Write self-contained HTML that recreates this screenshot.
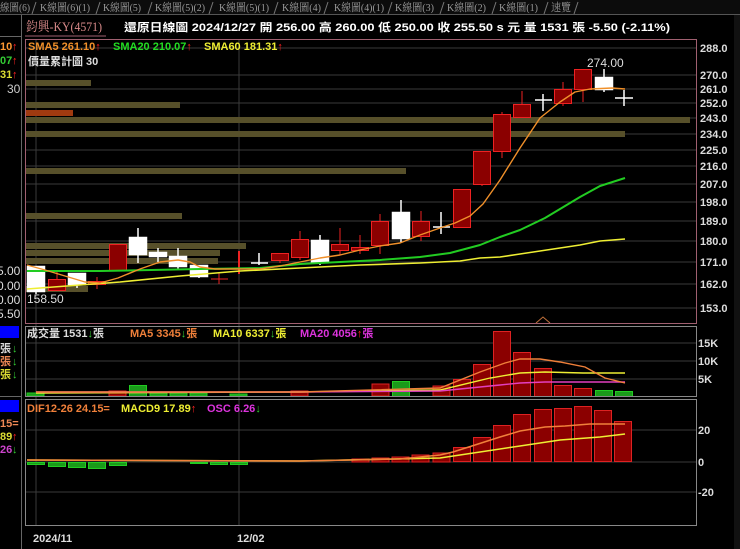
<!DOCTYPE html>
<html><head><meta charset="utf-8"><style>
body{margin:0;background:#000;width:740px;height:549px;overflow:hidden}
svg{display:block}
.s{font-family:"Liberation Sans","Noto Sans CJK TC",sans-serif;font-size:11px;font-weight:bold}
.t{font-family:"Liberation Serif","Noto Serif CJK SC",serif;font-size:11px;fill:#9a9a9a}
</style></head><body>
<svg width="740" height="549" xmlns="http://www.w3.org/2000/svg">
<rect width="740" height="549" fill="#000"/>
<!-- tabs -->
<rect x="0" y="0" width="740" height="14" fill="#0c0c0c"/>
<line x1="0" y1="14.5" x2="740" y2="14.5" stroke="#555"/>
<g class="t">
<text x="0" y="11" textLength="30" lengthAdjust="spacingAndGlyphs">線圖(6)</text>
<text x="40" y="11" textLength="50" lengthAdjust="spacingAndGlyphs">K線圖(6)(1)</text>
<text x="103" y="11" textLength="38" lengthAdjust="spacingAndGlyphs">K線圖(5)</text>
<text x="155" y="11" textLength="50" lengthAdjust="spacingAndGlyphs">K線圖(5)(2)</text>
<text x="219" y="11" textLength="50" lengthAdjust="spacingAndGlyphs">K線圖(5)(1)</text>
<text x="282" y="11" textLength="39" lengthAdjust="spacingAndGlyphs">K線圖(4)</text>
<text x="334" y="11" textLength="50" lengthAdjust="spacingAndGlyphs">K線圖(4)(1)</text>
<text x="395" y="11" textLength="39" lengthAdjust="spacingAndGlyphs">K線圖(3)</text>
<text x="447" y="11" textLength="39" lengthAdjust="spacingAndGlyphs">K線圖(2)</text>
<text x="499" y="11" textLength="39" lengthAdjust="spacingAndGlyphs">K線圖(1)</text>
<text x="551" y="11" textLength="20" lengthAdjust="spacingAndGlyphs">速覽</text>
</g>
<g stroke="#777" fill="none"><path d="M32 14 L36 2 M96 14 L100 2 M148 14 L152 2 M209 14 L213 2 M274 14 L278 2 M324 14 L328 2 M388 14 L392 2 M440 14 L444 2 M492 14 L496 2 M544 14 L548 2 M574 14 L578 2"/></g>
<!-- left column -->
<line x1="21.5" y1="15" x2="21.5" y2="549" stroke="#666"/>
<line x1="0" y1="36.5" x2="21" y2="36.5" stroke="#666"/>
<g class="s">
<text x="0" y="50" fill="#ff9933">10</text><text x="12" y="50" fill="#f22">↑</text>
<text x="0" y="64" fill="#3c3">07</text><text x="12" y="64" fill="#f22">↑</text>
<text x="0" y="78" fill="#dd3">31</text><text x="12" y="78" fill="#f22">↑</text>
<text x="7" y="93" fill="#ccc" font-weight="normal" font-size="12">30</text>
<text x="-3" y="275" fill="#ddd" font-weight="normal" font-size="12">5.00</text>
<text x="-3" y="290" fill="#ddd" font-weight="normal" font-size="12">0.00</text>
<text x="-3" y="304" fill="#ddd" font-weight="normal" font-size="12">0.00</text>
<text x="-3" y="318" fill="#ddd" font-weight="normal" font-size="12">5.50</text>
<text x="0" y="352" fill="#ddd">張</text><text x="12" y="352" fill="#3c3">↓</text>
<text x="0" y="365" fill="#e85">張</text><text x="12" y="365" fill="#3c3">↓</text>
<text x="0" y="378" fill="#dd3">張</text><text x="12" y="378" fill="#3c3">↓</text>
<text x="0" y="427" fill="#e85">15=</text>
<text x="0" y="440" fill="#dd3">89</text><text x="12" y="440" fill="#f22">↑</text>
<text x="0" y="453" fill="#c4c">26</text><text x="12" y="453" fill="#3c3">↓</text>
</g>
<rect x="0" y="326" width="19" height="12" fill="#00f"/>
<rect x="0" y="400" width="19" height="12" fill="#00f"/>
<line x1="0" y1="396.5" x2="21" y2="396.5" stroke="#666"/>
<!-- header -->
<text x="26" y="31" font-family="Liberation Serif,'Noto Serif CJK SC',serif" font-size="13" fill="#d98a8a" textLength="76" lengthAdjust="spacingAndGlyphs">鈞興-KY(4571)</text>
<line x1="25" y1="36" x2="106" y2="36" stroke="#a06070"/>
<text x="124" y="31" class="s" font-size="13" fill="#fff" textLength="546" lengthAdjust="spacingAndGlyphs">還原日線圖  2024/12/27  開 256.00  高 260.00  低 250.00  收 255.50 s 元  量 1531 張  -5.50 (-2.11%)</text>
<!-- grid -->
<g stroke="#3a3a3a">
<line x1="26" y1="48" x2="696" y2="48"/><line x1="26" y1="75" x2="696" y2="75"/><line x1="26" y1="89" x2="696" y2="89"/><line x1="26" y1="103" x2="696" y2="103"/><line x1="26" y1="118" x2="696" y2="118"/><line x1="26" y1="134" x2="696" y2="134"/><line x1="26" y1="150" x2="696" y2="150"/><line x1="26" y1="166" x2="696" y2="166"/><line x1="26" y1="184" x2="696" y2="184"/><line x1="26" y1="202" x2="696" y2="202"/><line x1="26" y1="221" x2="696" y2="221"/><line x1="26" y1="241" x2="696" y2="241"/><line x1="26" y1="262" x2="696" y2="262"/><line x1="26" y1="284" x2="696" y2="284"/><line x1="26" y1="308" x2="696" y2="308"/>
<line x1="36" y1="40" x2="36" y2="525"/><line x1="239" y1="40" x2="239" y2="525"/>
<line x1="26" y1="343" x2="696" y2="343"/><line x1="26" y1="361" x2="696" y2="361"/><line x1="26" y1="379" x2="696" y2="379"/>
<line x1="26" y1="430" x2="696" y2="430"/><line x1="26" y1="462" x2="696" y2="462"/><line x1="26" y1="492" x2="696" y2="492"/>
</g>
<!-- volume profile -->
<g fill="#57502a">
<rect x="26" y="80" width="65" height="6"/><rect x="26" y="102" width="154" height="6"/>
<rect x="26" y="117" width="664" height="6"/><rect x="26" y="131" width="599" height="6"/>
<rect x="26" y="168" width="380" height="6"/><rect x="26" y="213" width="156" height="6"/>
<rect x="26" y="243" width="220" height="6"/><rect x="26" y="250" width="194" height="6"/>
<rect x="26" y="258" width="192" height="6"/><rect x="26" y="286" width="62" height="6"/>
</g>
<rect x="26" y="110" width="47" height="6" fill="#a03a10"/>
<!-- candles -->
<g stroke="#e22" fill="#8b0000" stroke-width="1">
<line x1="57" y1="272" x2="57" y2="290"/><rect x="48.5" y="279.5" width="17" height="11"/>
<line x1="97" y1="277" x2="97" y2="289"/><rect x="88.5" y="281.5" width="17" height="3"/>
<line x1="118" y1="244" x2="118" y2="270"/><rect x="109.5" y="244.5" width="17" height="26"/>
<line x1="219" y1="273" x2="219" y2="284"/><line x1="211" y1="279" x2="228" y2="279"/>
<line x1="239" y1="251" x2="239" y2="274" stroke-width="2"/>
<line x1="280" y1="253" x2="280" y2="263"/><rect x="271.5" y="253.5" width="17" height="7"/>
<line x1="300" y1="231" x2="300" y2="260"/><rect x="291.5" y="239.5" width="17" height="18"/>
<line x1="340" y1="228" x2="340" y2="255"/><rect x="331.5" y="244.5" width="17" height="6"/>
<line x1="360" y1="235" x2="360" y2="254"/><rect x="351.5" y="247.5" width="17" height="3"/>
<line x1="380" y1="214" x2="380" y2="254"/><rect x="371.5" y="221.5" width="17" height="24"/>
<line x1="421" y1="211" x2="421" y2="241"/><rect x="412.5" y="221.5" width="17" height="15"/>
<rect x="453.5" y="189.5" width="17" height="38"/>
<line x1="482" y1="151" x2="482" y2="186"/><rect x="473.5" y="151.5" width="17" height="33"/>
<line x1="502" y1="112" x2="502" y2="158"/><rect x="493.5" y="114.5" width="17" height="37"/>
<line x1="522" y1="91" x2="522" y2="117"/><rect x="513.5" y="104.5" width="17" height="13"/>
<line x1="563" y1="82" x2="563" y2="106"/><rect x="554.5" y="89.5" width="17" height="14"/>
<line x1="583" y1="69" x2="583" y2="102"/><rect x="574.5" y="69.5" width="17" height="20"/>
</g>
<g stroke="#fff" fill="#fff" stroke-width="1.5">
<line x1="36" y1="266" x2="36" y2="294"/><rect x="27.5" y="266.5" width="17" height="25"/>
<line x1="77" y1="273" x2="77" y2="288"/><rect x="68.5" y="273.5" width="17" height="11"/>
<line x1="138" y1="228" x2="138" y2="263"/><rect x="129.5" y="237.5" width="17" height="17"/>
<line x1="158" y1="248" x2="158" y2="262"/><rect x="149.5" y="252.5" width="17" height="4"/>
<line x1="178" y1="248" x2="178" y2="270"/><rect x="169.5" y="256.5" width="17" height="10"/>
<line x1="199" y1="265" x2="199" y2="278"/><rect x="190.5" y="265.5" width="17" height="11"/>
<line x1="259" y1="253" x2="259" y2="265"/><line x1="251" y1="263" x2="268" y2="263"/>
<line x1="320" y1="235" x2="320" y2="265"/><rect x="311.5" y="240.5" width="17" height="22"/>
<line x1="401" y1="200" x2="401" y2="243"/><rect x="392.5" y="212.5" width="17" height="26"/>
<line x1="441" y1="212" x2="441" y2="234"/><line x1="433" y1="227" x2="450" y2="227"/>
<line x1="543" y1="94" x2="543" y2="111"/><line x1="535" y1="100" x2="552" y2="100"/>
<line x1="604" y1="69" x2="604" y2="92"/><rect x="595.5" y="77.5" width="17" height="12"/>
<line x1="624" y1="90" x2="624" y2="106"/><line x1="615" y1="98" x2="633" y2="98"/>
</g>
<!-- MAs -->
<g fill="none" stroke-width="1.6" stroke-linejoin="round">
<polyline stroke="#ee3" points="27,289 80,285 120,282 180,276 240,271 300,268 360,265 420,263 460,261 480,258 500,257 520,254 540,251 560,248 580,245 600,241 625,239"/>
<polyline stroke="#2c2" stroke-width="2" points="27,271 100,271 200,269 260,268 300,264 340,262 380,260 420,257 450,253 480,245 500,237 520,230 545,218 560,209 580,197 600,186 625,178"/>
<polyline stroke="#f0902a" stroke-width="1.4" points="27,265 45,270 65,276 85,282 100,283 118,278 140,269 160,262 178,260 190,262 200,267 215,269 240,269 260,269 280,266 300,262 320,258 340,255 360,250 380,246 400,243 420,235 440,228 455,223 470,216 483,204 500,180 520,148 540,118 560,102 575,92 590,89 612,88 625,89"/>
</g>
<path d="M536 323 L543 317 L550 323" stroke="#c0703a" fill="none"/>
<!-- main labels -->
<g class="s">
<text x="28" y="50" fill="#f0902a">SMA5 261.10<tspan fill="#f22">↑</tspan></text>
<text x="113" y="50" fill="#2d2">SMA20 210.07<tspan fill="#f22">↑</tspan></text>
<text x="204" y="50" fill="#ee3">SMA60 181.31<tspan fill="#f22">↑</tspan></text>
<text x="28" y="65" fill="#ddd">價量累計圖 30</text>
<text x="587" y="67" fill="#ddd" font-weight="normal" font-size="12">274.00</text>
<text x="27" y="303" fill="#ddd" font-weight="normal" font-size="12">158.50</text>
</g>
<!-- volume bars -->
<g fill="#8b0000" stroke="#d22">
<rect x="453.5" y="379.5" width="17" height="17"/><rect x="473.5" y="364.5" width="17" height="32"/><rect x="493.5" y="331.5" width="17" height="65"/><rect x="513.5" y="352.5" width="17" height="44"/><rect x="534.5" y="368.5" width="17" height="28"/><rect x="554.5" y="385.5" width="17" height="11"/><rect x="574.5" y="388.5" width="17" height="8"/>
<rect x="372" y="384" width="17" height="12"/><rect x="433" y="386" width="17" height="10"/><rect x="109" y="391" width="17" height="5"/><rect x="291" y="391" width="17" height="5"/>
</g>
<g fill="#1a9a1a" stroke="#2c2">
<rect x="595.5" y="390.5" width="17" height="6"/><rect x="615.5" y="391.5" width="17" height="5"/>
<rect x="129.5" y="385.5" width="17" height="11"/><rect x="392.5" y="381.5" width="17" height="15"/>
<rect x="27" y="393" width="17" height="3"/><rect x="150" y="393" width="17" height="3"/><rect x="170" y="393" width="17" height="3"/><rect x="190" y="393" width="17" height="3"/><rect x="230" y="394" width="17" height="2"/>
</g>
<g fill="none" stroke-width="1.4">
<polyline stroke="#ee3" points="36,393 300,392 440,390 490,378 520,373 545,372 583,373 625,373"/>
<polyline stroke="#e33fc0" points="36,392 300,392 440,391 500,385 520,383 545,382 625,382"/>
<polyline stroke="#f0803a" points="36,392 300,392 440,388 480,372 505,363 520,359 540,359 560,362 585,367 605,378 625,383"/>
</g>
<g class="s">
<text x="27" y="337" fill="#ddd">成交量 1531<tspan fill="#3c3">↓</tspan>張</text>
<text x="130" y="337" fill="#f0803a">MA5 3345<tspan fill="#3c3">↓</tspan>張</text>
<text x="213" y="337" fill="#ee3">MA10 6337<tspan fill="#3c3">↓</tspan>張</text>
<text x="300" y="337" fill="#d3d">MA20 4056<tspan fill="#f22">↑</tspan>張</text>
</g>
<!-- MACD bars -->
<g fill="#8b0000" stroke="#d22">
<rect x="453.5" y="447.5" width="17" height="14"/><rect x="473.5" y="437.5" width="17" height="24"/><rect x="493.5" y="425.5" width="17" height="36"/><rect x="513.5" y="414.5" width="17" height="47"/><rect x="534.5" y="409.5" width="17" height="52"/><rect x="554.5" y="408.5" width="17" height="53"/><rect x="574.5" y="406.5" width="17" height="55"/><rect x="594.5" y="410.5" width="17" height="51"/><rect x="614.5" y="421.5" width="17" height="40"/>
<rect x="352" y="459" width="17" height="3"/><rect x="372" y="458" width="17" height="4"/><rect x="392" y="457" width="17" height="5"/><rect x="412" y="455" width="17" height="7"/><rect x="433" y="453" width="17" height="9"/>
</g>
<g fill="#1a9a1a" stroke="#2c2">
<rect x="27.5" y="462.5" width="17" height="2"/><rect x="48.5" y="462.5" width="17" height="4"/><rect x="68.5" y="462.5" width="17" height="5"/><rect x="88.5" y="462.5" width="17" height="6"/><rect x="109.5" y="462.5" width="17" height="3"/><rect x="190.5" y="462.5" width="17" height="1"/><rect x="210.5" y="462.5" width="17" height="2"/><rect x="230.5" y="462.5" width="17" height="2"/>
</g>
<g fill="none" stroke-width="1.5">
<polyline stroke="#ee3" points="27,460 300,461 440,458 480,452 520,446 560,440 600,437 625,434"/>
<polyline stroke="#f0803a" points="27,460 300,461 400,459 440,455 453,452 475,445 500,437 520,431 545,427 565,426 590,424 625,424"/>
</g>
<g class="s">
<text x="27" y="412" fill="#f0803a">DIF12-26 24.15=</text>
<text x="121" y="412" fill="#ee3">MACD9 17.89<tspan fill="#f22">↑</tspan></text>
<text x="207" y="412" fill="#d3d">OSC 6.26<tspan fill="#3c3">↓</tspan></text>
</g>
<!-- frames -->
<rect x="25.5" y="39.5" width="671" height="284" fill="none" stroke="#a06070"/>
<rect x="25.5" y="326.5" width="671" height="70" fill="none" stroke="#888"/>
<rect x="25.5" y="399.5" width="671" height="126" fill="none" stroke="#888"/>
<!-- axes -->
<g class="s" fill="#ddd">
<text x="700" y="52">288.0</text><text x="700" y="79">270.0</text><text x="700" y="93">261.0</text><text x="700" y="107">252.0</text><text x="700" y="122">243.0</text><text x="700" y="138">234.0</text><text x="700" y="154">225.0</text><text x="700" y="170">216.0</text><text x="700" y="188">207.0</text><text x="700" y="206">198.0</text><text x="700" y="225">189.0</text><text x="700" y="245">180.0</text><text x="700" y="266">171.0</text><text x="700" y="288">162.0</text><text x="700" y="312">153.0</text>
<text x="698" y="347">15K</text><text x="698" y="365">10K</text><text x="698" y="383">5K</text>
<text x="698" y="434">20</text><text x="698" y="466">0</text><text x="698" y="496">-20</text>
<text x="33" y="542">2024/11</text><text x="237" y="542">12/02</text>
</g>
<rect x="734" y="15" width="6" height="534" fill="#111"/>
</svg>
</body></html>
